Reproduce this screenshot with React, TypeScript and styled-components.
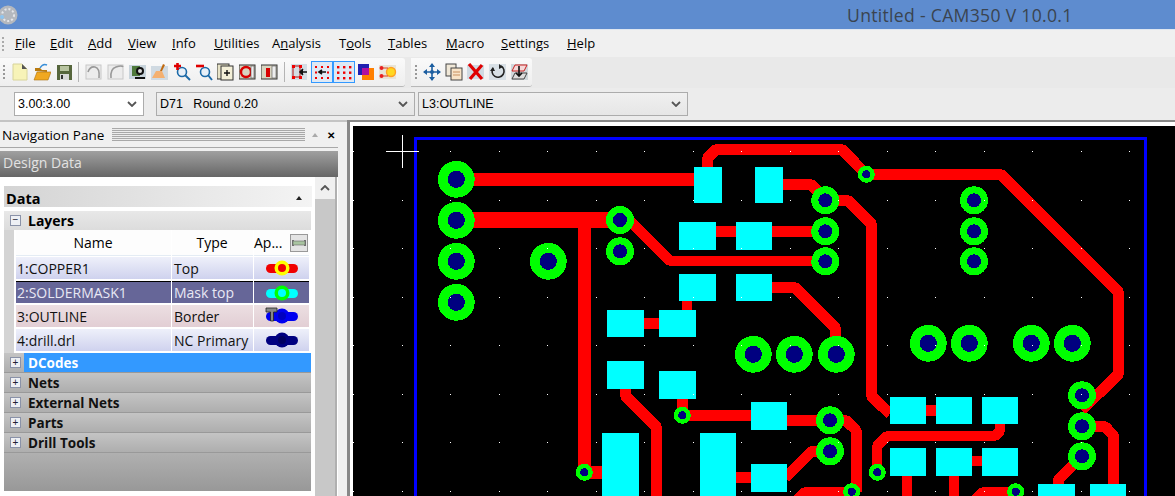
import React from "react";
import styled, { createGlobalStyle } from "styled-components";

const GlobalStyle = createGlobalStyle`
  html, body { margin: 0; padding: 0; background: #f0f0f0; }
  body { font-family: "Open Sans", "Liberation Sans", sans-serif; color: #000; }
`;

const menuItems: { first: string; rest: string; key?: string; width: number }[] = [
  { first: "F", rest: "ile", width: 35 },
  { first: "E", rest: "dit", width: 38 },
  { first: "A", rest: "dd", width: 40 },
  { first: "V", rest: "iew", width: 44 },
  { first: "I", rest: "nfo", width: 42 },
  { first: "U", rest: "tilities", width: 58 },
  { first: "A", key: "n", rest: "alysis", width: 67 },
  { first: "T", key: "o", rest: "ols", width: 49 },
  { first: "T", rest: "ables", width: 58 },
  { first: "M", rest: "acro", width: 55 },
  { first: "S", rest: "ettings", width: 66 },
  { first: "H", rest: "elp", width: 30 },
];

const icons: Record<string, React.ReactNode> = {
  file: <><path d="M2 1h9l5 5v11H2z" fill="#f7f3b8" stroke="#d8d49a" /><path d="M11 1l5 5h-5z" fill="#555" /></>,
  open: <><path d="M2 8V5h5l2 2h5v2z" fill="#b87a10" /><path d="M1 17l3-8h14l-3 8z" fill="#f0a820" stroke="#a87010" strokeWidth=".6" /><path d="M7 5q3-5 7-3" fill="none" stroke="#3a8fd8" strokeWidth="1.4" /></>,
  save: <><rect x="2" y="2" width="15" height="15" fill="#56663c" /><rect x="5" y="3" width="9" height="5" fill="#b8c4a0" /><rect x="5" y="11" width="9" height="6" fill="#d8d8d8" /><rect x="6" y="12" width="2" height="4" fill="#333" /></>,
  undo: <><rect x="1" y="2" width="15" height="14" fill="#ececec" stroke="#c8c8c8" /><path d="M3 9q2-6 7-5t4 11" fill="none" stroke="#999" strokeWidth="1.6" /></>,
  redo: <><rect x="1" y="2" width="15" height="14" fill="#ececec" stroke="#c8c8c8" /><path d="M4 15q-1-9 5-11t7 0" fill="none" stroke="#999" strokeWidth="1.6" /></>,
  view: <><rect x="0" y="2" width="17" height="14" fill="#c8d4dc" /><rect x="3" y="3" width="8" height="10" fill="#4f7a3c" /><circle cx="11" cy="8" r="4" fill="#111" /><circle cx="11" cy="8" r="2" fill="#ddd" /><path d="M6 15h10" stroke="#111" strokeWidth="2" /></>,
  brush: <><rect x="0" y="3" width="17" height="14" fill="#d0dae2" /><path d="M1 15l4-7h6l3 7z" fill="#f4b070" /><path d="M9 8l3-7 2 1-3 6z" fill="#c06a10" /></>,
  zoomIn: <><circle cx="9" cy="9" r="4.5" fill="#e8f0f8" stroke="#1c6aa8" strokeWidth="1.6" /><path d="M12 12l5 5" stroke="#1c6aa8" strokeWidth="2" /><path d="M1 3h7M4.5 0v7" stroke="#e00000" strokeWidth="2.6" /></>,
  zoomOut: <><circle cx="10" cy="9" r="4.5" fill="#e8f0f8" stroke="#1c6aa8" strokeWidth="1.6" /><path d="M13 12l4 5" stroke="#1c6aa8" strokeWidth="2" /><path d="M1 3h8" stroke="#e00000" strokeWidth="2.6" /></>,
  frameA: <><rect x="0" y="1" width="12" height="15" fill="#e8e4c8" stroke="#333" /><rect x="4" y="3" width="12" height="14" fill="#f4f0d8" stroke="#333" /><path d="M7 10h6M10 7v6" stroke="#111" strokeWidth="1.4" /></>,
  frameB: <><rect x="0" y="2" width="16" height="14" fill="#d8d4c0" stroke="#333" /><circle cx="7" cy="9" r="5" fill="none" stroke="#d80000" strokeWidth="2.4" /><rect x="12" y="3" width="3" height="12" fill="#eee" stroke="#555" strokeWidth=".6" /></>,
  frameC: <><rect x="0" y="2" width="16" height="14" fill="#d8d4c0" stroke="#333" /><rect x="5" y="5" width="4" height="9" fill="#d80000" /><rect x="11" y="3" width="4" height="12" fill="#eee" stroke="#555" strokeWidth=".6" /></>,
  snap: <><rect x="0" y="1" width="16" height="16" fill="#d4dde4" /><rect x="2" y="3" width="7" height="11" fill="none" stroke="#b01010" strokeWidth="1" /><g fill="#f00000"><rect x="1" y="2" width="3" height="3" /><rect x="8" y="2" width="3" height="3" /><rect x="1" y="13" width="3" height="3" /><rect x="8" y="13" width="3" height="3" /></g><path d="M9 9h7M12 6l-3 3 3 3" stroke="#111" strokeWidth="1.6" fill="#111" /></>,
  dotsA: <><g fill="#f00000">{[2, 8, 14].flatMap((x) => [3, 14].map((y) => <rect key={`${x}-${y}`} x={x} y={y} width="2" height="2" />))}<rect x="2" y="8.5" width="2" height="2" /><rect x="14" y="8.5" width="2" height="2" /></g><path d="M6 9h7M9 7l-3 2 3 2" stroke="#111" strokeWidth="1.6" fill="#111" /></>,
  dotsB: <g fill="#f00000">{[2, 8, 14].flatMap((x) => [3, 8.5, 14].map((y) => <rect key={`${x}-${y}`} x={x} y={y} width="2.4" height="2.4" />))}</g>,
  tint: <><rect x="1" y="1" width="11" height="11" fill="#2020b0" /><rect x="5" y="5" width="12" height="12" fill="#ff8000" /><rect x="5" y="5" width="7" height="7" fill="#b010a0" /></>,
  sun: <><rect x="0" y="2" width="17" height="14" fill="#e8e4d8" /><circle cx="12" cy="9" r="4.5" fill="#ffd820" stroke="#ffa020" strokeWidth="1.4" /><circle cx="2.5" cy="5" r="2" fill="#e82020" /><circle cx="2.5" cy="13" r="2" fill="#e82020" /><path d="M4 5h5M4 13h5" stroke="#e04020" strokeWidth="1" /></>,
  move: <><path d="M9 1v16M1 9h16" stroke="#1c5ea0" strokeWidth="1.6" /><path d="M9 0l3 4H6zM9 18l3-4H6zM0 9l4-3v6zM18 9l-4-3v6z" fill="#1c5ea0" /><circle cx="9" cy="9" r="2" fill="#1c5ea0" /></>,
  copy: <><rect x="1" y="1" width="10" height="12" fill="#f0e8d8" stroke="#444" /><rect x="6" y="5" width="11" height="12" fill="#f8e4c8" stroke="#444" /><path d="M8 9h7M8 12h7" stroke="#c89060" /></>,
  remove: <><rect x="0" y="2" width="17" height="14" fill="#d0dae2" /><path d="M2 1l13 15M15 2L3 16" stroke="#e00000" strokeWidth="3.2" /></>,
  rotate: <><rect x="0" y="1" width="17" height="16" fill="#d8e0e6" /><path d="M12 3a6 6 0 1 1-8 2" fill="none" stroke="#222" strokeWidth="1.6" /><path d="M1 8l5 0-2-4zM10 1l4 3-4 2z" fill="#222" /></>,
  stack: <><rect x="0" y="1" width="17" height="16" fill="#d0d8dc" /><path d="M4 2h12l-3 6H1z" fill="#f4d8d8" stroke="#c82020" /><path d="M4 10h12l-3 6H1z" fill="#ddd" stroke="#444" /><path d="M8 3v10M5 10l3 3 3-3" stroke="#111" strokeWidth="1.6" fill="none" /></>,
};

const firstTools = [
  ["file", "open", "save"],
  ["undo", "redo", "view", "brush", "zoomIn", "zoomOut", "frameA", "frameB", "frameC"],
  ["snap", "dotsA", "dotsB", "tint", "sun"],
];
const secondTools = ["move", "copy", "remove", "rotate", "stack"];

const layers = [
  { name: "1:COPPER1", type: "Top", tone: "blue", bar: "#f00000", ring: "#ffff00", hole: "#f00000" },
  { name: "2:SOLDERMASK1", type: "Mask top", tone: "selected", bar: "#00ffff", ring: "#00ff00", hole: "#00ffff" },
  { name: "3:OUTLINE", type: "Border", tone: "pink", bar: "#0000f0", ring: "#0000f0", hole: "#0000c0", hammer: true },
  { name: "4:drill.drl", type: "NC Primary", tone: "blue", bar: "#000080", ring: "#000080", hole: "#000060" },
];

const collapsed = ["DCodes", "Nets", "External Nets", "Parts", "Drill Tools"];

// everything on the board is given in page coordinates, the viewBox takes care of the offset
const traces: [number, number[]][] = [
  [12.7, [456, 179.3, 700, 179.3]],
  [15.7, [456, 220, 620, 220]],
  [13, [584.5, 220, 584.5, 472]],
  [10, [622, 213, 670, 261, 825, 261]],
  [11, [707.5, 170, 707.5, 158, 716, 149.5, 842, 149.5, 866.3, 174.3]],
  [11, [866.3, 174.5, 1001, 174.5, 1118.5, 292, 1118.5, 374, 1082, 410]],
  [11, [770, 184.5, 811, 184.5, 825, 198]],
  [11, [825, 200.5, 848, 200.5, 871.5, 224, 871.5, 396, 890, 414]],
  [11, [716, 231.5, 825, 231.5]],
  [10, [687, 298, 687, 312]],
  [11, [644, 323.5, 659, 323.5]],
  [11, [625.5, 386, 625.5, 396, 656.5, 427, 656.5, 496]],
  [11, [682.5, 396, 682.5, 415.5, 755, 415.5]],
  [13, [584.5, 472.5, 605, 472.5]],
  [11, [733, 477.5, 755, 477.5]],
  [11, [770, 287.5, 795, 287.5, 835.5, 328, 835.5, 354]],
  [11, [785, 420.5, 846, 420.5, 856, 430, 856, 492]],
  [11, [785, 478, 812, 451, 830, 451]],
  [10, [851, 492, 805, 492, 795, 502]],
  [11, [923, 410.5, 938, 410.5]],
  [10, [970, 461, 985, 461]],
  [10, [1000, 420, 1000, 431, 995, 436, 887, 436, 877, 446, 877, 472]],
  [10, [907, 474, 907, 496]],
  [10, [954, 474, 954, 496]],
  [10, [1015, 492, 983, 492, 973, 502]],
  [11, [1082, 426.5, 1105, 426.5, 1113.7, 436, 1113.7, 486]],
  [11, [1082, 456, 1058, 480, 1058, 486]],
];

const pastes = [
  [694, 167, 28, 36], [755, 167, 28, 36], [679, 222, 37, 28], [736, 222, 36, 28],
  [679, 274, 37, 27], [736, 274, 36, 27], [607, 310, 37, 27], [659, 310, 37, 27],
  [607, 361, 37, 28], [659, 371, 37, 28], [751, 402, 36, 28], [602, 433, 37, 63],
  [700, 433, 36, 63], [751, 464, 36, 28], [890, 397, 36, 27], [936, 397, 36, 27],
  [982, 397, 36, 27], [890, 448, 36, 28], [936, 448, 36, 28], [982, 448, 36, 28],
  [1038, 484, 37, 12], [1090, 484, 36, 12],
];

const bigPads = [
  [456.3, 179.3], [456.3, 220.3], [456.3, 261.3], [456.3, 302.3], [548.3, 261.3],
  [753.3, 354.3], [794.3, 354.3], [836.3, 354.3], [928.3, 343.3], [969.3, 343.3],
  [1031.3, 343.3], [1072.3, 343.3],
];
const midPads = [
  [620, 220], [620, 251.3], [825.3, 200.3], [825.3, 231.3], [825.3, 261.3],
  [974, 200.3], [974, 231.3], [974, 261.3], [830, 420.3], [830, 451.3],
  [1082, 395.3], [1082, 426.3], [1082, 456.3],
];
const vias = [
  [866.3, 174.3], [584.3, 472.3], [682.3, 415.3], [877.3, 472.3], [851.7, 491.7], [1015.7, 491.7],
];

const gridX = Array.from({ length: 17 }, (_, i) => 353 + i * 48.5);
const gridY = Array.from({ length: 8 }, (_, i) => 151 + i * 48.5);

const Board = () => (
  <BoardSvg viewBox="353 126 822 370" shapeRendering="crispEdges">
    <rect x="353" y="126" width="822" height="370" fill="#000" />
    {traces.map(([w, pts], i) => (
      <polyline key={i} points={pts.join(" ")} fill="none" stroke="#ff0000" strokeWidth={w} strokeLinejoin="bevel" />
    ))}
    {pastes.map(([x, y, w, h], i) => (
      <rect key={i} x={x} y={y} width={w} height={h} fill="#00ffff" />
    ))}
    {bigPads.map(([cx, cy], i) => (
      <g key={i}><circle cx={cx} cy={cy} r="18.4" fill="#00ff00" /><circle cx={cx} cy={cy} r="8.6" fill="#000080" /></g>
    ))}
    {midPads.map(([cx, cy], i) => (
      <g key={i}><circle cx={cx} cy={cy} r="14" fill="#00ff00" /><circle cx={cx} cy={cy} r="7" fill="#000080" /></g>
    ))}
    {vias.map(([cx, cy], i) => (
      <g key={i}><circle cx={cx} cy={cy} r="8.5" fill="#00ff00" /><circle cx={cx} cy={cy} r="4" fill="#000080" /></g>
    ))}
    <path d="M415.5 496V138.5H1145V496" fill="none" stroke="#0000ff" strokeWidth="3" />
    {gridX.flatMap((x) => gridY.map((y) => <rect key={`${x}-${y}`} x={x} y={y} width="1" height="1" fill="#fff" />))}
    <path d="M386 151.5h33M402.5 135v33" stroke="#fff" strokeWidth="1" />
  </BoardSvg>
);

const Chevron = () => (
  <ChevronSvg viewBox="0 0 10 6"><path d="M1 1l4 4 4-4" fill="none" stroke="#555" strokeWidth="1.8" /></ChevronSvg>
);

const Combo = ({ label, width, plain }: { label: string; width: number; plain?: boolean }) => (
  <ComboBox $width={width} $plain={plain}><span>{label}</span><Chevron /></ComboBox>
);

const Legend = ({ bar, ring, hole, hammer }: { bar: string; ring: string; hole: string; hammer?: boolean }) => (
  <svg width="34" height="18" viewBox="0 0 34 18">
    <rect x="1" y="5" width="32" height="9" rx="4.5" fill={bar} />
    <circle cx="17" cy="9" r="7.5" fill={ring} />
    <circle cx="17" cy="9" r="4" fill={hole} />
    {hammer && <path d="M1 1h11v4H8.5v9h-3V5H1z" fill="#888" stroke="#222" strokeWidth=".8" />}
  </svg>
);

const ToolButton = ({ name, active }: { name: string; active?: boolean }) => (
  <Tool $active={active}><svg width="18" height="18" viewBox="0 0 18 18">{icons[name]}</svg></Tool>
);

const App = () => (
  <Page>
    <GlobalStyle />
    <TitleBar>
      <AppIcon viewBox="0 0 20 20">
        <circle cx="8" cy="10" r="9.5" fill="#b4b8be" />
        <circle cx="8" cy="10" r="6" fill="none" stroke="#e4e6ea" strokeWidth="2" strokeDasharray="2 2" />
        <circle cx="2" cy="12" r="2" fill="#8cc4f0" />
      </AppIcon>
      <WindowTitle>Untitled - CAM350 V 10.0.1</WindowTitle>
    </TitleBar>
    <MenuBar>
      <MenuGrip />
      {menuItems.map((m) => (
        <MenuItem key={m.first + m.rest} $width={m.width}>
          {m.key ? <>{m.first}<u>{m.key}</u>{m.rest}</> : <><u>{m.first}</u>{m.rest}</>}
        </MenuItem>
      ))}
    </MenuBar>
    <ToolRow>
      <Toolbar $width={405}>
        <ToolGrip />
        {firstTools.map((group, i) => (
          <React.Fragment key={i}>
            {i > 0 && <ToolSep />}
            {group.map((name) => <ToolButton key={name} name={name} active={name.startsWith("dots")} />)}
          </React.Fragment>
        ))}
      </Toolbar>
      <Toolbar $width={121}>
        <ToolGrip />
        {secondTools.map((name) => <ToolButton key={name} name={name} />)}
      </Toolbar>
    </ToolRow>
    <ComboRow>
      <Combo label="3.00:3.00" width={130} plain />
      <Spacer />
      <Combo label="D71   Round 0.20" width={259} />
      <Combo label="L3:OUTLINE" width={270} />
    </ComboRow>
    <Workspace>
      <NavPane>
        <PaneHeader>
          <span>Navigation Pane</span>
          <Hatch />
          <PaneArrow />
          <PaneClose>✕</PaneClose>
        </PaneHeader>
        <DesignBar>Design Data</DesignBar>
        <PaneBody>
          <DataColumn>
            <DataHeader><span>Data</span><DataArrow /></DataHeader>
            <GroupHead $open>
              <Expander>−</Expander>
              Layers
            </GroupHead>
            <TableWrap>
              <TableGrid>
                <HeadCell>Name</HeadCell>
                <HeadCell>Type</HeadCell>
                <HeadCell $icon>
                  Ap...
                  <FitButton viewBox="0 0 18 18">
                    <rect x=".5" y=".5" width="17" height="17" fill="#e4e4e4" stroke="#999" />
                    <path d="M3 6v6M15 6v6" stroke="#555" strokeWidth="1.6" />
                    <rect x="3" y="7" width="12" height="4" fill="#a8c4a0" stroke="#666" strokeWidth=".6" />
                  </FitButton>
                </HeadCell>
                {layers.map((l) => (
                  <React.Fragment key={l.name}>
                    <Cell $tone={l.tone}>{l.name}</Cell>
                    <Cell $tone={l.tone} $inset={2}>{l.type}</Cell>
                    <Cell $tone={l.tone} $center>
                      <Legend bar={l.bar} ring={l.ring} hole={l.hole} hammer={l.hammer} />
                    </Cell>
                  </React.Fragment>
                ))}
              </TableGrid>
            </TableWrap>
            {collapsed.map((name, i) => (
              <GroupRow key={name}>
                <ExpanderSlot><Expander>+</Expander></ExpanderSlot>
                <GroupLabel $active={i === 0}>{name}</GroupLabel>
              </GroupRow>
            ))}
            <PaneFill />
          </DataColumn>
          <Scrollbar>
            <ScrollUp>
              <svg width="10" height="6" viewBox="0 0 10 6"><path d="M1 5l4-4 4 4" fill="none" stroke="#555" strokeWidth="1.8" /></svg>
            </ScrollUp>
          </Scrollbar>
        </PaneBody>
      </NavPane>
      <CanvasFrame><Board /></CanvasFrame>
    </Workspace>
  </Page>
);

export default App;

const Page = styled.div`
  width: 1175px;
  height: 496px;
  overflow: hidden;
  display: flex;
  flex-direction: column;
  background: #f0f0f0;
`;

const TitleBar = styled.div`
  height: 29px;
  flex: none;
  display: flex;
  align-items: center;
  background: #5e8ccf;
  border-bottom: 1px solid #dfe6f0;
`;

const AppIcon = styled.svg`
  width: 20px;
  height: 20px;
  flex: none;
`;

const WindowTitle = styled.div`
  margin-left: 827px;
  font-size: 17.6px;
  letter-spacing: 0.3px;
  color: #3a4450;
  white-space: nowrap;
`;

const MenuBar = styled.div`
  height: 27px;
  flex: none;
  display: flex;
  align-items: center;
  padding: 0 0 2px 15px;
  box-sizing: border-box;
  position: relative;
  background: #f0f0f0;
  font-size: 13px;
`;

const MenuGrip = styled.div`
  position: absolute;
  left: 2px;
  top: 7px;
  width: 2px;
  height: 14px;
  background: repeating-linear-gradient(#aaa 0 2px, transparent 2px 4px);
`;

const MenuItem = styled.span<{ $width: number }>`
  width: ${(p) => p.$width}px;
  flex: none;
  white-space: nowrap;
`;

const ToolRow = styled.div`
  height: 31px;
  flex: none;
  display: flex;
  gap: 6px;
  padding-top: 1px;
  box-sizing: border-box;
  background: #e9e9e9;
`;

const Toolbar = styled.div<{ $width: number }>`
  width: ${(p) => p.$width}px;
  height: 29px;
  display: flex;
  align-items: center;
  position: relative;
  padding-left: 9px;
  box-sizing: border-box;
  background: linear-gradient(#fafafa, #eeeeee);
  border-bottom: 1px solid #b8b8b8;
  border-radius: 0 3px 3px 0;

  & + & {
    padding-left: 10px;
  }
`;

const ToolGrip = styled.div`
  position: absolute;
  left: 3px;
  top: 7px;
  width: 2px;
  height: 15px;
  background: repeating-linear-gradient(#999 0 2px, transparent 2px 4px);

  ${Toolbar} + ${Toolbar} & {
    left: 4px;
  }
`;

const Tool = styled.div<{ $active?: boolean }>`
  width: 22px;
  height: 22px;
  flex: none;
  display: flex;
  align-items: center;
  justify-content: center;
  box-sizing: border-box;
  border: 1px solid ${(p) => (p.$active ? "#3399ff" : "transparent")};
  background: ${(p) => (p.$active ? "#dfe9f4" : "transparent")};
`;

const ToolSep = styled.div`
  width: 1px;
  height: 20px;
  margin: 0 4px 0 3px;
  background: #b4b4b4;
  flex: none;
`;

const ComboRow = styled.div`
  height: 32px;
  flex: none;
  display: flex;
  align-items: center;
  gap: 3px;
  padding-left: 14px;
  box-sizing: border-box;
  background: #ececec;
`;

const Spacer = styled.div`
  width: 6px;
  flex: none;
`;

const ComboBox = styled.div<{ $width: number; $plain?: boolean }>`
  width: ${(p) => p.$width}px;
  height: 24px;
  flex: none;
  box-sizing: border-box;
  display: flex;
  align-items: center;
  justify-content: space-between;
  padding: 0 6px 0 3px;
  border: 1px solid #acacac;
  background: ${(p) => (p.$plain ? "#fff" : "linear-gradient(#f0f0f0, #e6e6e6)")};
  font-family: "Liberation Sans", sans-serif;
  font-size: 12.5px;
  white-space: pre;
`;

const ChevronSvg = styled.svg`
  width: 10px;
  height: 6px;
  flex: none;
`;

const Workspace = styled.div`
  flex: 1;
  min-height: 0;
  display: flex;
`;

const NavPane = styled.div`
  width: 347px;
  flex: none;
  display: flex;
  flex-direction: column;
  padding-right: 9px;
  box-sizing: border-box;
  border-top: 2px solid #c4c4c4;
  background: #f0f0f0;
`;

const PaneHeader = styled.div`
  height: 25px;
  flex: none;
  display: flex;
  align-items: center;
  padding-left: 2px;
  border-bottom: 1px solid #a8a8a8;
  font-size: 13.5px;
  white-space: nowrap;
`;

const Hatch = styled.div`
  width: 193px;
  height: 13px;
  margin-left: 8px;
  background: repeating-linear-gradient(#a8a8a8 0 1px, #ececec 1px 2px);
`;

const PaneArrow = styled.div`
  margin-left: 7px;
  border-left: 3px solid transparent;
  border-right: 3px solid transparent;
  border-bottom: 4px solid #aaa;
`;

const PaneClose = styled.span`
  margin-left: 9px;
  font-size: 10px;
  font-weight: 700;
`;

const DesignBar = styled.div`
  height: 26px;
  flex: none;
  margin-top: 3px;
  display: flex;
  align-items: center;
  padding: 0 0 3px 3px;
  box-sizing: border-box;
  background: linear-gradient(#a0a0a0, #666);
  color: #e2e2e2;
  font-size: 14px;
`;

const PaneBody = styled.div`
  flex: 1;
  min-height: 0;
  display: flex;
  background: #fff;
`;

const DataColumn = styled.div`
  width: 307px;
  margin-left: 4px;
  padding-top: 9px;
  flex: none;
  display: flex;
  flex-direction: column;
`;

const DataHeader = styled.div`
  height: 21px;
  flex: none;
  display: flex;
  align-items: center;
  justify-content: space-between;
  padding: 3px 10px 0 2px;
  box-sizing: border-box;
  margin-right: -1px;
  background: linear-gradient(90deg, #d4d4d4, #f4f4f4);
  font-size: 14.5px;
  font-weight: 700;
`;

const DataArrow = styled.div`
  border-left: 3px solid transparent;
  border-right: 3px solid transparent;
  border-bottom: 4px solid #222;
`;

const GroupHead = styled.div<{ $open?: boolean }>`
  height: 19px;
  flex: none;
  margin-top: 4px;
  display: flex;
  align-items: center;
  gap: 7px;
  padding: 0 0 1px 6px;
  box-sizing: border-box;
  background: linear-gradient(#e8e8e8, #dcdcdc);
  font-size: 14px;
  font-weight: 700;
`;

const Expander = styled.span`
  width: 9px;
  height: 9px;
  flex: none;
  display: flex;
  align-items: center;
  justify-content: center;
  border: 1px solid #8a92a8;
  background: #eef0f4;
  color: #223;
  font-family: "Liberation Sans", sans-serif;
  font-size: 10px;
  font-weight: 400;
  line-height: 1;
`;

const TableWrap = styled.div`
  height: 123px;
  flex: none;
  padding-left: 10px;
  background: #d4d4d4;
`;

const TableGrid = styled.div`
  display: grid;
  grid-template-columns: 155px 81px 1fr;
  grid-template-rows: 25px repeat(4, 22px);
  column-gap: 1px;
  row-gap: 2px;
  height: 100%;
  padding: 0 2px 0 2px;
  box-sizing: border-box;
  background: #fff;
`;

const HeadCell = styled.div<{ $icon?: boolean }>`
  display: flex;
  align-items: center;
  justify-content: ${(p) => (p.$icon ? "space-between" : "center")};
  padding: 0 1px 0 0;
  margin-bottom: -1px;
  border-bottom: 1px solid #e4ecf4;
  background: #fdfdfd;
  font-size: 14px;
`;

const FitButton = styled.svg`
  width: 18px;
  height: 18px;
  flex: none;
`;

const toneBg: Record<string, string> = {
  blue: "linear-gradient(#eef0fa, #cfd2ee)",
  pink: "linear-gradient(#ecdfe2, #e2ced4)",
  selected: "#666698",
};

const Cell = styled.div<{ $tone: string; $center?: boolean; $inset?: number }>`
  display: flex;
  align-items: center;
  justify-content: ${(p) => (p.$center ? "center" : "flex-start")};
  padding-left: ${(p) => (p.$center ? 0 : p.$inset ?? 1)}px;
  background: ${(p) => toneBg[p.$tone]};
  color: ${(p) => (p.$tone === "selected" ? "#e8e8f4" : "#111")};
  border-top: ${(p) => (p.$tone === "selected" ? "1px solid #000" : "none")};
  font-size: 14px;
  white-space: nowrap;
`;

const GroupRow = styled.div`
  height: 20px;
  flex: none;
  display: flex;
  box-sizing: border-box;
  border-bottom: 1px solid #999;
  background: linear-gradient(#c4c4c4, #aeaeae);
`;

const ExpanderSlot = styled.div`
  width: 20px;
  flex: none;
  display: flex;
  align-items: center;
  padding-left: 6px;
  box-sizing: border-box;
`;

const GroupLabel = styled.div<{ $active?: boolean }>`
  flex: 1;
  display: flex;
  align-items: center;
  padding-left: 4px;
  font-size: 13.5px;
  font-weight: 700;
  color: ${(p) => (p.$active ? "#fff" : "#111")};
  background: ${(p) => (p.$active ? "#3399ff" : "transparent")};
`;

const PaneFill = styled.div`
  height: 38px;
  flex: none;
  background: linear-gradient(#b0b0b0, #989898);
`;

const Scrollbar = styled.div`
  width: 20px;
  margin-left: 4px;
  flex: none;
  background: #c8c8c8;
  border-right: 2px solid #b0b0b0;
`;

const ScrollUp = styled.div`
  height: 22px;
  display: flex;
  align-items: center;
  justify-content: center;
  background: #f0f0f0;
`;

const CanvasFrame = styled.div`
  flex: 1;
  min-width: 0;
  box-sizing: border-box;
  border-top: 2px solid #888;
  border-left: 3px solid #888;
  padding: 4px 0 0 3px;
  background: #fff;
`;

const BoardSvg = styled.svg`
  display: block;
  width: 822px;
  height: 370px;
`;
